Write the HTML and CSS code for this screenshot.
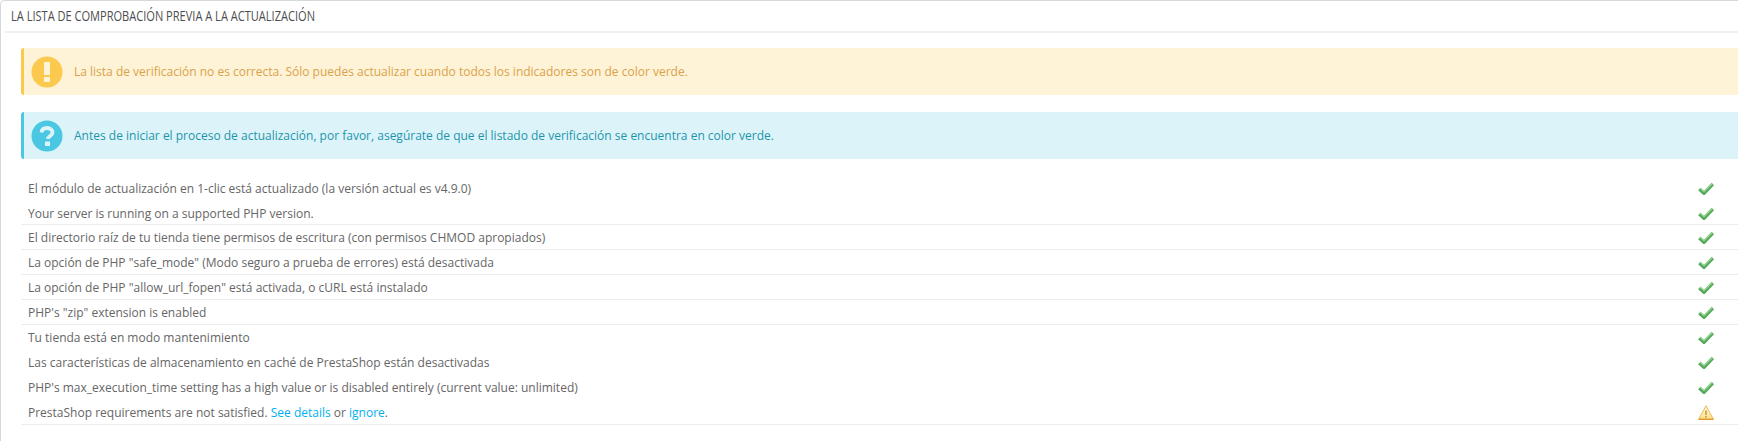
FILE: index.html
```html
<!DOCTYPE html>
<html lang="es">
<head>
<meta charset="utf-8">
<title>Lista de comprobación</title>
<link rel="stylesheet" href="styles.css">
</head>
<body>
<svg class="sprite" aria-hidden="true">
  <symbol id="check" viewBox="0 0 16 13">
    <path d="M1.300 7l4.700 4.300L14.800 2" fill="none" stroke="#55a95c" stroke-width="3.400"/>
    <path d="M2 6l4 3.600L14.300 1.500" fill="none" stroke="#9ad898" stroke-width="1.300"/>
  </symbol>
</svg>
<section class="panel">
  <h3 class="panel-heading"><span class="heading-text">La lista de comprobación previa a la actualización</span></h3>
  <div class="alert alert-warning">
    <svg class="alert-icon" viewBox="0 0 32 32"><circle cx="16" cy="16" r="15.5" fill="#fcc94f"/><rect x="13" y="6" width="6" height="13" fill="#fff3d7"/><rect x="13" y="21" width="6" height="5" fill="#fff3d7"/></svg>
    <p>La lista de verificación no es correcta. Sólo puedes actualizar cuando todos los indicadores son de color verde.</p>
  </div>
  <div class="alert alert-info">
    <svg class="alert-icon" viewBox="0 0 32 32"><circle cx="16" cy="16" r="15.5" fill="#4ac7e3"/><path d="M10.5 12.5c.3-3 2.4-4.5 5.5-4.5 3.200 0 5.500 1.800 5.500 4.400 0 3.600-4.500 3.600-4.500 6.600" fill="none" stroke="#dcf4f9" stroke-width="3.800"/><rect x="14" y="21.500" width="5" height="4.500" fill="#dcf4f9"/></svg>
    <p>Antes de iniciar el proceso de actualización, por favor, asegúrate de que el listado de verificación se encuentra en color verde.</p>
  </div>
  <table class="checklist">
    <tr><td>El módulo de actualización en 1-clic está actualizado (la versión actual es v4.9.0)</td><td class="status"><svg class="ok"><use href="#check"/></svg></td></tr>
    <tr class="lined short"><td>Your server is running on a supported PHP version.</td><td class="status"><svg class="ok"><use href="#check"/></svg></td></tr>
    <tr class="lined"><td>El directorio raíz de tu tienda tiene permisos de escritura (con permisos CHMOD apropiados)</td><td class="status"><svg class="ok"><use href="#check"/></svg></td></tr>
    <tr class="lined"><td>La opción de PHP "safe_mode" (Modo seguro a prueba de errores) está desactivada</td><td class="status"><svg class="ok"><use href="#check"/></svg></td></tr>
    <tr class="lined"><td>La opción de PHP "allow_url_fopen" está activada, o cURL está instalado</td><td class="status"><svg class="ok"><use href="#check"/></svg></td></tr>
    <tr class="lined"><td>PHP's "zip" extension is enabled</td><td class="status"><svg class="ok"><use href="#check"/></svg></td></tr>
    <tr><td>Tu tienda está en modo mantenimiento</td><td class="status"><svg class="ok"><use href="#check"/></svg></td></tr>
    <tr><td>Las características de almacenamiento en caché de PrestaShop están desactivadas</td><td class="status"><svg class="ok"><use href="#check"/></svg></td></tr>
    <tr><td>PHP's max_execution_time setting has a high value or is disabled entirely (current value: unlimited)</td><td class="status"><svg class="ok"><use href="#check"/></svg></td></tr>
    <tr class="lined"><td>PrestaShop requirements are not satisfied. <a href="#">See details</a> or <a href="#">ignore</a>.</td><td class="status"><svg class="warn" viewBox="0 0 16 15"><defs><linearGradient id="warn-fill" x1="0" y1="0" x2="0" y2="1"><stop offset="0" stop-color="#fffbe8"/><stop offset="1" stop-color="#fbe08a"/></linearGradient></defs><path d="M8 .7L15.400 14.300H.6z" fill="url(#warn-fill)" stroke="#efb95a" stroke-width="1" stroke-linejoin="round"/><path d="M.6 14.300H15.400" stroke="#dc9420" stroke-width="1.200"/><path d="M8 5.500v4.500" stroke="#d8ab4c" stroke-width="2"/><path d="M8 11v1.700" stroke="#d8ab4c" stroke-width="2"/></svg></td></tr>
  </table>
</section>
</body>
</html>
```
FILE: styles.css
```css
html, body {
  margin: 0;
  padding: 0;
  background: #fff;
  overflow: hidden;
}
body {
  height: 441px;
  font-family: "Open Sans", sans-serif;
  font-size: 12px;
  color: #666;
}
.sprite {
  display: none;
}
.panel {
  box-sizing: border-box;
  height: 441px;
  margin-right: -10px;
  padding: 0 0 0 20px;
  border-top: 1px solid #d3d8db;
  border-left: 1px solid #d3d8db;
  border-top-left-radius: 5px;
}
.panel-heading {
  box-sizing: border-box;
  height: 32px;
  margin: 0 0 15px -16px;
  padding-left: 6px;
  border-bottom: 2px solid #eef0f1;
  font-family: "Open Sans", sans-serif;
  font-size: 15px;
  font-weight: 500;
  line-height: 29px;
  text-transform: uppercase;
  color: #4d4d4d;
}
.heading-text {
  display: inline-block;
  white-space: nowrap;
  transform: scaleX(0.737);
  transform-origin: left center;
}
.alert {
  box-sizing: border-box;
  display: flex;
  align-items: center;
  gap: 11px;
  height: 47px;
  margin-bottom: 17px;
  padding-left: 7px;
  border-left: 3px solid;
  border-radius: 3px 0 0 3px;
  font-size: 12px;
}
.alert p {
  margin: 0;
}
.alert-icon {
  width: 32px;
  height: 32px;
  flex: none;
}
.alert-warning {
  background: #fff3d7;
  border-color: #fcc94f;
  color: #d9a24a;
}
.alert-info {
  background: #dcf4f9;
  border-color: #4ac7e3;
  color: #1e94ab;
}
.checklist {
  width: 1717px;
  border-collapse: separate;
  border-spacing: 0;
  font-size: 12px;
}
.checklist td {
  box-sizing: border-box;
  height: 25px;
  padding: 0 7px;
}
.checklist tr.lined td {
  border-bottom: 1px solid #eaedef;
}
.checklist tr.short td {
  height: 24px;
  padding-top: 1px;
}
.checklist a {
  color: #00aff0;
  text-decoration: none;
}
.status {
  width: 40px;
}
.checklist td.status {
  padding: 0 24px 0 0;
}
.ok, .warn {
  display: block;
  margin-left: auto;
}
.ok {
  width: 16px;
  height: 13px;
}
.warn {
  width: 16px;
  height: 15px;
}
```
